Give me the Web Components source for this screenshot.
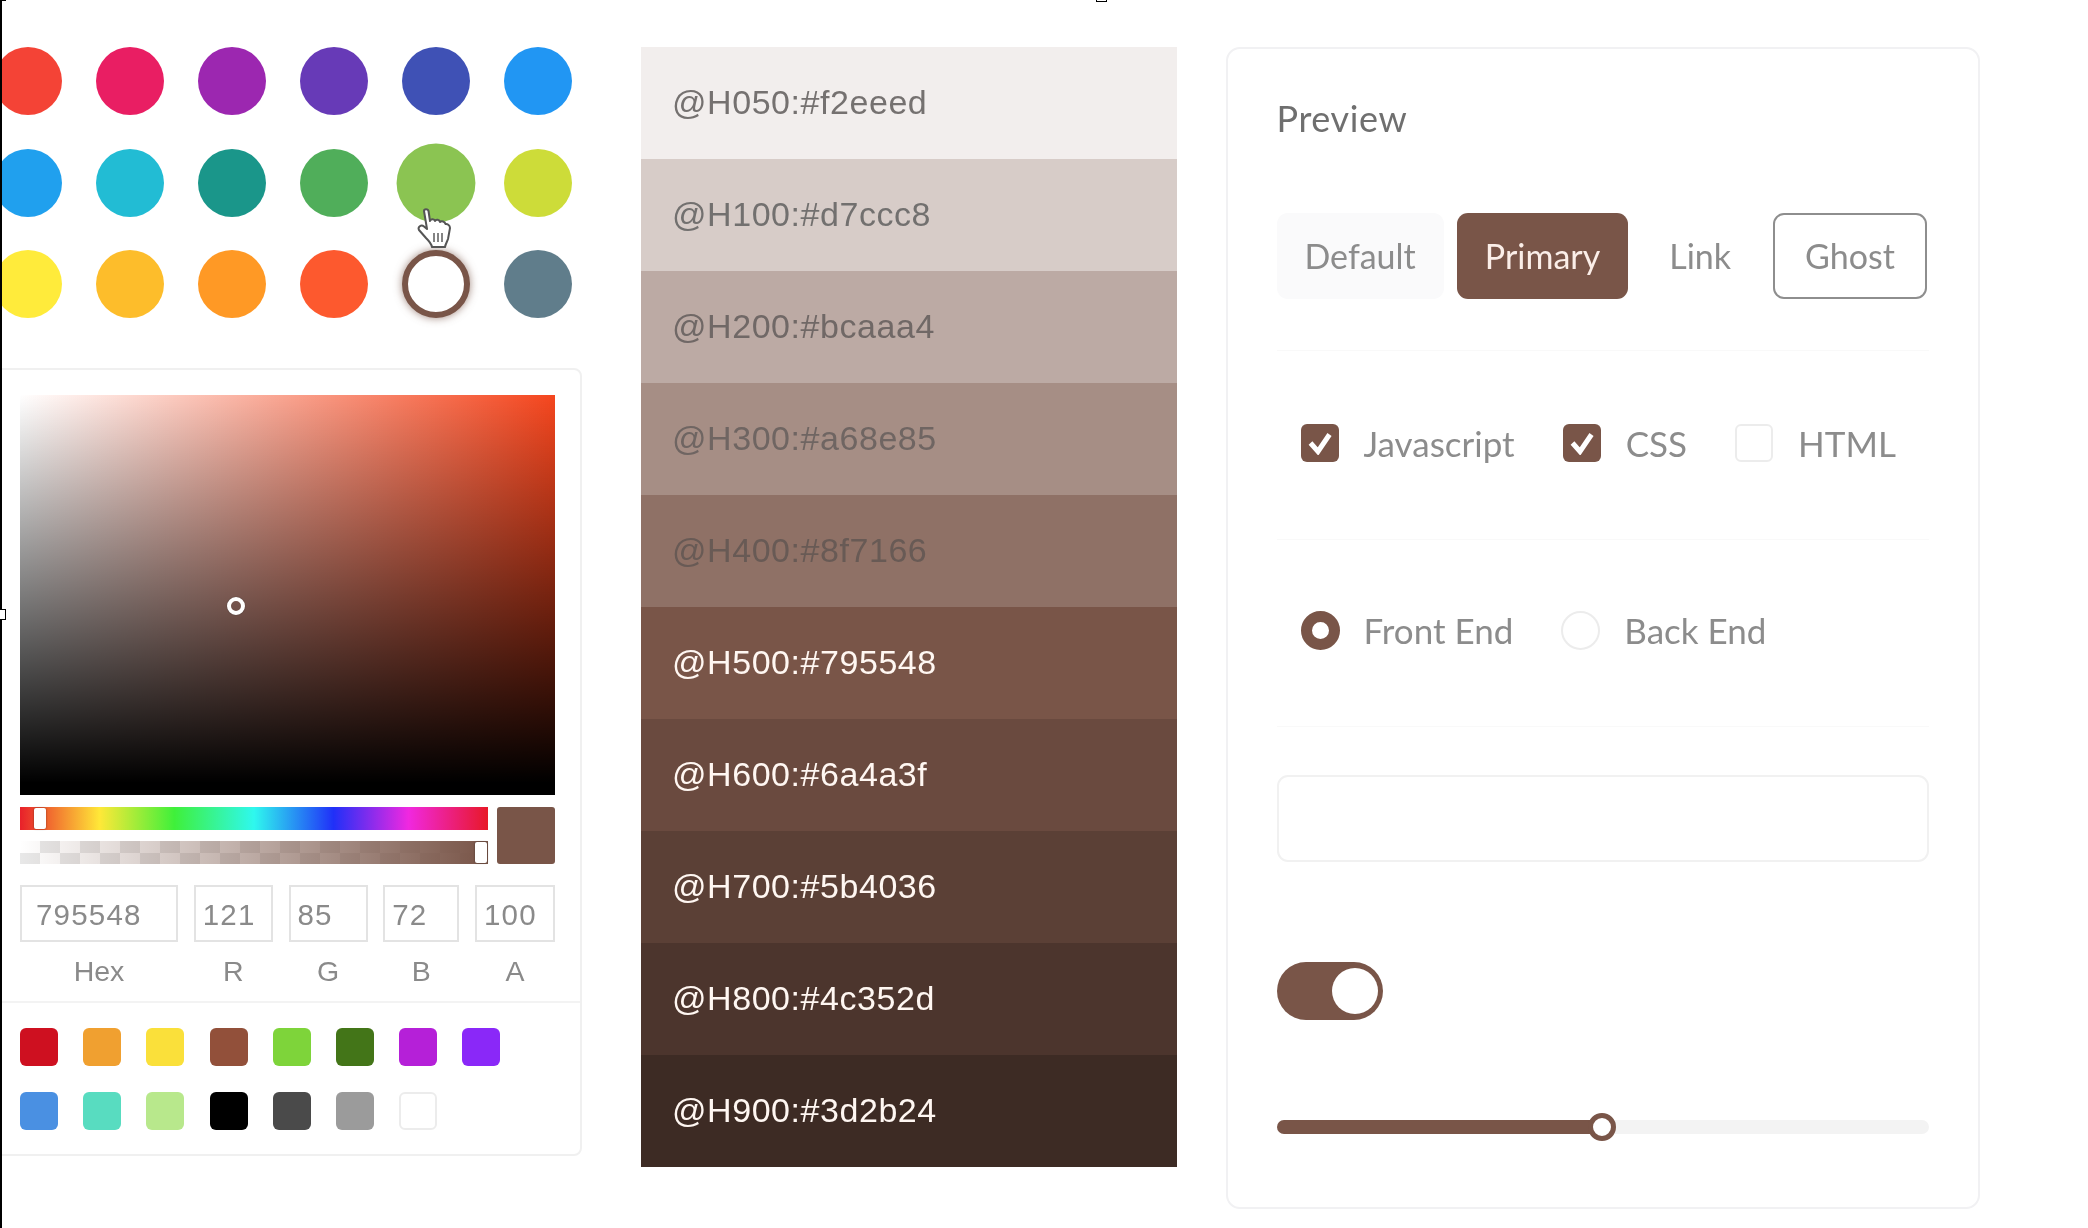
<!DOCTYPE html>
<html>
<head>
<meta charset="utf-8">
<title>Theme colors</title>
<style>
  html, body { margin: 0; background: #fff; overflow: hidden; }
  body { width: 2088px; height: 1228px; font-family: "Liberation Sans", sans-serif; }
  .page { display: flex; align-items: flex-start; padding-top: 47px; margin-left: -6px; filter: blur(.5px); }
</style>
</head>
<body>
<selection-frame></selection-frame>
<div class="page">
  <div>
    <color-dots></color-dots>
    <color-picker></color-picker>
  </div>
  <palette-list></palette-list>
  <preview-card>
    <ui-button>Default</ui-button>
    <ui-button kind="primary">Primary</ui-button>
    <ui-button kind="link">Link</ui-button>
    <ui-button kind="ghost">Ghost</ui-button>
  </preview-card>
</div>

<script>
const BRAND = '#795548';

function shadow(el, html) {
  el.attachShadow({ mode: 'open' }).innerHTML = html;
}

class SelectionFrame extends HTMLElement {
  connectedCallback() {
    shadow(this, `
      <style>
        :host { position: absolute; left: 0; top: 0; width: 2088px; height: 1228px; pointer-events: none; z-index: 5; }
        .line { position: absolute; left: 0; top: 0; width: 2px; height: 100%; background: #000; }
        .top { position: absolute; left: 0; top: 0; width: 6px; height: 1px; background: #000; }
        .h { position: absolute; box-sizing: border-box; border: 1.5px solid #000; background: #fff; }
        .mid { left: 1096px; top: -8px; width: 11px; height: 10px; }
        .side { left: -5px; top: 609px; width: 11px; height: 11px; }
      </style>
      <div class="line"></div><div class="top"></div>
      <div class="h mid"></div><div class="h side"></div>`);
  }
}
customElements.define('selection-frame', SelectionFrame);

class ColorDots extends HTMLElement {
  connectedCallback() {
    const colors = ['#f44336','#e91e63','#9c27b0','#673ab7','#3f51b5','#2196f3',
      '#20a0ee','#22bcd4','#1a968a','#50ae5a','#8bc452','#cddc39',
      '#ffeb3b','#fdbd2b','#ff9925','#fd592e','sel','#607d8b'];
    const dots = colors.map((c, i) => {
      if (c === 'sel') return '<i class="sel"></i>';
      return `<i class="${i === 10 ? 'hover' : ''}" style="background:${c}"></i>`;
    }).join('');
    shadow(this, `
      <style>
        :host { display: block; position: relative; }
        .grid { display: grid; grid-template-columns: repeat(6, 68px); column-gap: 34px; row-gap: 33.5px; }
        i { display: block; width: 68px; height: 68px; border-radius: 50%; }
        .hover { transform: scale(1.16); }
        .sel { box-sizing: border-box; background: #fff; border: 6.5px solid ${BRAND}; box-shadow: 0 0 8px rgba(121,85,72,.7); }
        svg { position: absolute; left: 423px; top: 161px; }
      </style>
      <div class="grid">${dots}</div>
      <svg width="36" height="40" viewBox="0 0 36 40">
        <path d="M7 3C7 .5 11 .5 11.5 3L13 13C14 10.5 17.5 11 18 13C19 11 22.5 11.5 23 14C24.5 12.5 28 13.5 28.5 16C30 15.5 33 17 33 20L31 31C30 34 28.5 36 28 39L15 39C14.5 36 12 33 9 30L2 22C.5 19 4 16 7 18.5L10 21Z" fill="#fff" stroke="#555" stroke-width="2" stroke-linejoin="round"/>
        <path d="M17 25v9M21 25v9M25 25v9" stroke="#666" stroke-width="1.6"/>
      </svg>`);
  }
}
customElements.define('color-dots', ColorDots);

class ColorPicker extends HTMLElement {
  connectedCallback() {
    const fields = [['795548', 'Hex', 158], ['121', 'R', 79], ['85', 'G', 79], ['72', 'B', 76], ['100', 'A', 80]];
    const row1 = ['#ce1020','#f0a030','#fae03a','#92503a','#7ed43a','#437518','#b520d8','#8a28f8'];
    const row2 = ['#4a90e2','#58dcc0','#b8e88c','#000000','#4a4a4a','#9b9b9b','#ffffff'];
    const swatch = (c) => `<b style="background:${c}"${c === '#ffffff' ? ' class="blank"' : ''}></b>`;
    shadow(this, `
      <style>
        :host { display: block; box-sizing: border-box; width: 588px; margin-top: 50px; background: #fff;
          border: 2px solid #f0f0f0; border-radius: 8px; color: #8d8d8d; font-family: "Liberation Sans", sans-serif; }
        .top { padding: 25px 25px 0 24px; }
        .sat { position: relative; height: 400px;
          background: linear-gradient(to top, #000 0%, #000 3%, rgba(0,0,0,0) 100%), linear-gradient(to right, #fff, #f5461e); }
        .pointer { position: absolute; left: 207px; top: 202px; width: 18px; height: 18px; box-sizing: border-box;
          border: 4px solid #fff; border-radius: 50%; box-shadow: 0 0 1px #333; }
        .bars { display: flex; gap: 9px; margin-top: 12px; }
        .tracks { width: 468px; display: flex; flex-direction: column; gap: 11px; }
        .hue, .alpha { position: relative; height: 23px; }
        .hue { background: linear-gradient(to right, #e8202a 0%, #ffe838 17%, #3ff03a 33%, #2ff8ee 50%, #2030f8 67%, #f028e0 83%, #e81828 100%); }
        .alpha { background:
          linear-gradient(to right, rgba(121,85,72,0), ${BRAND}),
          repeating-conic-gradient(#e8e8e8 0 25%, #fff 0 50%) 0 0 / 40px 24px; }
        .knob { position: absolute; top: 1px; width: 12px; height: 21px; box-sizing: border-box; background: #fff; border-radius: 2px; box-shadow: 0 0 2px rgba(0,0,0,.5); }
        .now { width: 58px; background: ${BRAND}; border-radius: 3px; }
        .fields { display: flex; justify-content: space-between; margin-top: 21px; }
        .f { text-align: center; }
        .f span { display: block; box-sizing: border-box; height: 57px; line-height: 55px; border: 2px solid #e3e3e3;
          text-align: left; padding-left: 14px; font-size: 29.5px; letter-spacing: 1.2px; color: #8a8a8a; }
        .f:not(:first-child) span { padding-left: 7px; }
        .f label { display: block; margin-top: 11px; line-height: 37px; font-size: 28.5px; color: #8a8a8a; }
        hr { border: 0; border-top: 2px solid #f3f3f3; margin: 11px 0 0; }
        .swatches { padding: 25px 24px 24px; display: flex; flex-direction: column; gap: 26px; }
        .swatches div { display: flex; gap: 25.2px; }
        b { display: block; width: 38px; height: 38px; border-radius: 6px; }
        b.blank { box-sizing: border-box; border: 2px solid #ececec; }
      </style>
      <div class="top">
        <div class="sat"><div class="pointer"></div></div>
        <div class="bars">
          <div class="tracks">
            <div class="hue"><div class="knob" style="left:14px"></div></div>
            <div class="alpha"><div class="knob" style="right:1px"></div></div>
          </div>
          <div class="now"></div>
        </div>
        <div class="fields">
          ${fields.map(([v, l, w]) => `<div class="f" style="width:${w}px"><span>${v}</span><label>${l}</label></div>`).join('')}
        </div>
      </div>
      <hr>
      <div class="swatches">
        <div>${row1.map(swatch).join('')}</div>
        <div>${row2.map(swatch).join('')}</div>
      </div>`);
  }
}
customElements.define('color-picker', ColorPicker);

class PaletteList extends HTMLElement {
  connectedCallback() {
    const rows = [
      ['050','f2eeed','#757170'], ['100','d7ccc8','#72706f'], ['200','bcaaa4','#706866'],
      ['300','a68e85','#6f6562'], ['400','8f7166','#685a55'], ['500','795548','#fff7f2'],
      ['600','6a4a3f','#fff7f2'], ['700','5b4036','#fff7f2'], ['800','4c352d','#fff7f2'],
      ['900','3d2b24','#fff7f2']
    ];
    shadow(this, `
      <style>
        :host { display: block; width: 535.5px; margin-left: 59px; font-family: "Liberation Sans", sans-serif; }
        div { box-sizing: border-box; height: 112px; line-height: 110px; padding-left: 31px; font-size: 34px; letter-spacing: .55px; }
      </style>
      ${rows.map(([n, hex, ink]) => `<div style="background:#${hex};color:${ink}">@H${n}:#${hex}</div>`).join('')}`);
  }
}
customElements.define('palette-list', PaletteList);

class UiButton extends HTMLElement {
  connectedCallback() {
    shadow(this, `
      <style>
        :host { display: block; box-sizing: border-box; height: 86px; line-height: 85px; padding: 0 28px; border-radius: 11px;
          font-size: 34px; color: #8c8c8c; background: #fafafb; }
        :host([kind=primary]) { background: ${BRAND}; color: #fbeee8; }
        :host([kind=link]) { background: none; padding: 0 29px 0 28px; }
        :host([kind=ghost]) { background: #fff; border: 2px solid #8e8e8e; line-height: 81px; padding: 0 30px; }
      </style><slot></slot>`);
  }
}
customElements.define('ui-button', UiButton);

class UiCheck extends HTMLElement {
  connectedCallback() {
    const on = this.hasAttribute('on');
    shadow(this, `
      <style>
        :host { display: flex; align-items: center; gap: 25px; height: 40px; font-size: 35px; color: #8c8c8c; }
        i { display: block; box-sizing: border-box; width: 38px; height: 38px; border-radius: 6px; border: 2px solid #ececec; }
        i.on { border: 0; background: ${BRAND}; display: flex; align-items: center; justify-content: center; }
      </style>
      <i class="${on ? 'on' : ''}">${on ? '<svg width="26" height="24" viewBox="0 0 26 24"><path d="M3.5 12l7.5 8.500L22.500 3.500" fill="none" stroke="#fff" stroke-width="5"/></svg>' : ''}</i>
      <slot></slot>`);
  }
}
customElements.define('ui-check', UiCheck);

class UiRadio extends HTMLElement {
  connectedCallback() {
    const on = this.hasAttribute('on');
    shadow(this, `
      <style>
        :host { display: flex; align-items: center; gap: 24px; height: 40px; font-size: 35px; color: #8c8c8c; }
        i { display: block; box-sizing: border-box; width: 39px; height: 39px; border-radius: 50%; border: 2px solid #ececec; }
        i.on { border: 11.5px solid ${BRAND}; background: #fff; }
      </style>
      <i class="${on ? 'on' : ''}"></i><slot></slot>`);
  }
}
customElements.define('ui-radio', UiRadio);

class UiToggle extends HTMLElement {
  connectedCallback() {
    shadow(this, `
      <style>
        :host { display: flex; justify-content: flex-end; align-items: center; box-sizing: border-box; width: 106px; height: 58px; padding-right: 5px;
          border-radius: 29px; background: ${BRAND}; }
        i { display: block; width: 46px; height: 46px; border-radius: 50%; background: #fff; }
      </style><i></i>`);
  }
}
customElements.define('ui-toggle', UiToggle);

class UiSlider extends HTMLElement {
  connectedCallback() {
    shadow(this, `
      <style>
        :host { display: block; position: relative; height: 14px; border-radius: 7px; background: #f3f3f3; }
        .fill { width: 325px; height: 14px; border-radius: 7px 0 0 7px; background: ${BRAND}; }
        .thumb { position: absolute; left: 311px; top: -7px; box-sizing: border-box; width: 28px; height: 28px; border-radius: 50%;
          background: #fff; border: 5px solid ${BRAND}; }
      </style><div class="fill"></div><div class="thumb"></div>`);
  }
}
customElements.define('ui-slider', UiSlider);

class PreviewCard extends HTMLElement {
  connectedCallback() {
    shadow(this, `
      <style>
        :host { display: block; box-sizing: border-box; width: 754px; height: 1162px; margin: 0 0 0 49px; padding: 49px 49px 0 49px;
          border: 2px solid #f1f1f3; border-radius: 14px; font-family: Lato, sans-serif; background: #fff; }
        h2 { margin: 0; font-weight: 400; font-size: 36px; line-height: 40px; color: #6f6f6f; letter-spacing: .6px; }
        .buttons { display: flex; gap: 13px; margin-top: 75px; }
        .rule { border-top: 1px solid #f9f9f9; }
        .row { display: flex; padding-left: 24px; }
        .checks { gap: 48px; margin-top: 72px; }
        .radios { gap: 48px; margin-top: 70px; }
        .field { box-sizing: border-box; height: 87px; margin-top: 48px; border: 2px solid #f1f1f1; border-radius: 11px; }
        ui-toggle { margin-top: 100px; }
        ui-slider { margin-top: 100px; }
      </style>
      <h2>Preview</h2>
      <div class="buttons"><slot></slot></div>
      <div class="rule" style="margin-top:51px"></div>
      <div class="row checks">
        <ui-check on>Javascript</ui-check>
        <ui-check on>CSS</ui-check>
        <ui-check>HTML</ui-check>
      </div>
      <div class="rule" style="margin-top:76px"></div>
      <div class="row radios">
        <ui-radio on>Front End</ui-radio>
        <ui-radio>Back End</ui-radio>
      </div>
      <div class="rule" style="margin-top:76px"></div>
      <div class="field"></div>
      <ui-toggle></ui-toggle>
      <ui-slider></ui-slider>`);
  }
}
customElements.define('preview-card', PreviewCard);
</script>
</body>
</html>
